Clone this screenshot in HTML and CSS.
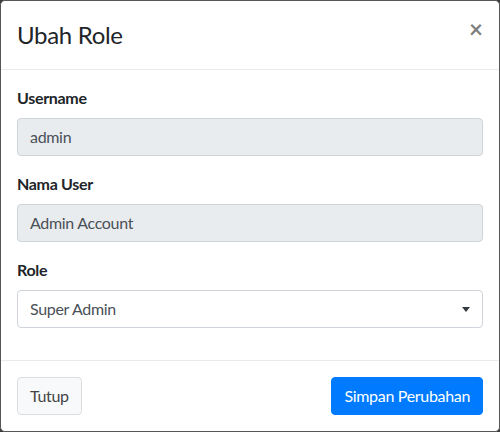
FILE: index.html
```html
<!DOCTYPE html>
<html lang="id">
<head>
<meta charset="utf-8">
<title>Ubah Role</title>
<link rel="stylesheet" href="styles.css">
</head>
<body>
<div class="modal">
  <div class="modal-header">
    <h4 class="modal-title">Ubah Role</h4>
    <button class="close" type="button">&times;</button>
  </div>
  <div class="modal-body">
    <div class="form-group">
      <label class="label">Username</label>
      <div class="form-control readonly">admin</div>
    </div>
    <div class="form-group">
      <label class="label">Nama User</label>
      <div class="form-control readonly">Admin Account</div>
    </div>
    <div class="form-group">
      <label class="label">Role</label>
      <div class="form-control select">
        <span>Super Admin</span>
        <svg class="caret" width="8" height="5" viewBox="0 0 8 5"><path d="M0 0h8L4 5z" fill="#343a40"/></svg>
      </div>
    </div>
  </div>
  <div class="modal-footer">
    <button class="btn btn-default" type="button">Tutup</button>
    <button class="btn btn-primary" type="button">Simpan Perubahan</button>
  </div>
</div>
</body>
</html>
```
FILE: styles.css
```css
html, body {
  margin: 0;
  padding: 0;
}
body {
  background: #3a3a3a;
  font-family: Lato, "Noto Sans", sans-serif;
  font-size: 16px;
  line-height: 1.5;
  letter-spacing: -0.02em;
  color: #212529;
  height: 432px;
  overflow: hidden;
}
.modal {
  box-sizing: border-box;
  width: 500px;
  height: 432px;
  background: #fff;
  border: 1px solid #555;
  border-radius: 4.8px;
  display: flex;
  flex-direction: column;
}
.modal-header {
  display: flex;
  align-items: flex-start;
  justify-content: space-between;
  padding: 16px;
  border-bottom: 1px solid #e9ecef;
}
.modal-title {
  margin: 0;
  font-size: 24px;
  font-weight: 400;
  line-height: 1.5;
}
.close {
  background: none;
  border: 0;
  padding: 16px;
  margin: -16px -16px -16px auto;
  font-family: inherit;
  font-size: 24px;
  font-weight: 700;
  line-height: 1;
  color: #000;
  opacity: 0.5;
  cursor: pointer;
}
.modal-body {
  padding: 16px;
}
.form-group {
  margin-bottom: 16px;
}
.label {
  display: block;
  font-weight: 700;
  margin-bottom: 8px;
}
.form-control {
  box-sizing: border-box;
  height: 38px;
  padding: 6px 12px;
  border: 1px solid #ced4da;
  border-radius: 4px;
  color: #495057;
  background: #fff;
  display: flex;
  align-items: center;
}
.readonly {
  background: #e9ecef;
}
.select {
  justify-content: space-between;
  padding-right: 12px;
}
.caret {
  display: block;
}
.modal-footer {
  margin-top: auto;
  display: flex;
  align-items: center;
  justify-content: space-between;
  padding: 12px;
  border-top: 1px solid #e9ecef;
}
.btn {
  margin: 4px;
  height: 38px;
  padding: 6px 12px;
  font-family: inherit;
  font-size: 16px;
  line-height: 1.5;
  letter-spacing: inherit;
  border-radius: 4px;
  border: 1px solid transparent;
  cursor: pointer;
}
.btn-default {
  background: #f8f9fa;
  border-color: #ddd;
  color: #444;
}
.btn-primary {
  background: #007bff;
  border-color: #007bff;
  color: #fff;
}
```
